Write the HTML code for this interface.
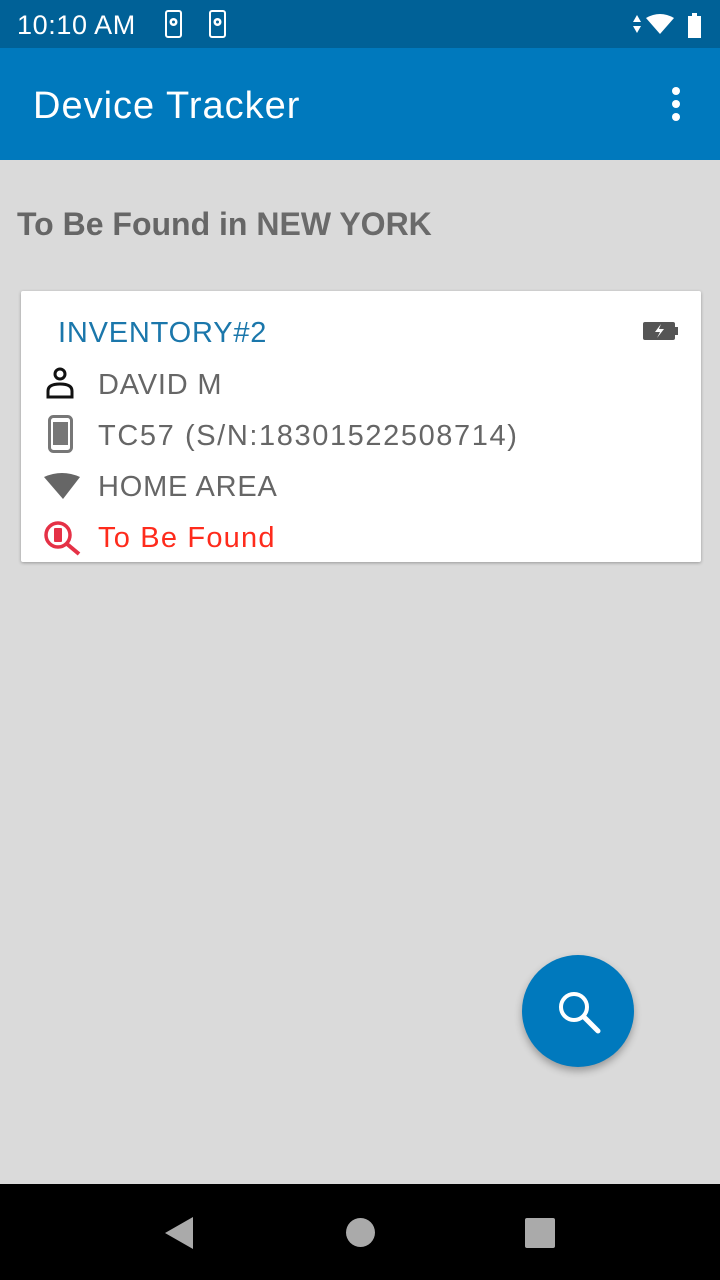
<!DOCTYPE html>
<html><head><style>
body{margin:0;width:720px;height:1280px;background:#dadada;font-family:"Liberation Sans",sans-serif;position:relative;overflow:hidden}
.sb{position:absolute;top:0;left:0;width:720px;height:48px;background:#006197;color:#fff}
.ab{position:absolute;top:48px;left:0;width:720px;height:112px;background:#0079bd;color:#fff}
.card{position:absolute;left:21px;top:291px;width:680px;height:271px;background:#fff;box-shadow:0 1px 3px rgba(0,0,0,.3);border-radius:2px}
.row{position:absolute;left:97px;font-size:29px;color:#666;letter-spacing:0.8px}
.nav{position:absolute;left:0;top:1184px;width:720px;height:96px;background:#000}
</style></head><body>
<div class="sb">
<div style="position:absolute;left:17px;top:10px;font-size:27px;letter-spacing:0.6px">10:10 AM</div>
<svg style="position:absolute;left:164px;top:10px" width="20" height="28"><rect x="2" y="1" width="15" height="26" rx="2" fill="none" stroke="#fff" stroke-width="2"/><circle cx="9.5" cy="12" r="4" fill="#fff"/><circle cx="9.5" cy="12" r="1.5" fill="#006197"/></svg>
<svg style="position:absolute;left:208px;top:10px" width="20" height="28"><rect x="2" y="1" width="15" height="26" rx="2" fill="none" stroke="#fff" stroke-width="2"/><circle cx="9.5" cy="12" r="4" fill="#fff"/><circle cx="9.5" cy="12" r="1.5" fill="#006197"/></svg>
<svg style="position:absolute;left:630px;top:12px" width="82" height="26"><path d="M3 10 L7 3 L11 10Z M3 14 L11 14 L7 21Z" fill="#fff"/><path d="M16 6 Q30 -2 44 6 L30 22Z" fill="#fff"/><rect x="58" y="4" width="13" height="22" fill="#fff"/><rect x="62" y="1" width="5" height="3" fill="#fff"/></svg>
</div>
<div class="ab">
<div style="position:absolute;left:33px;top:37px;font-size:38px;letter-spacing:1px">Device Tracker</div>
<svg style="position:absolute;left:668px;top:38px" width="16" height="40"><circle cx="8" cy="5" r="4" fill="#fff"/><circle cx="8" cy="18" r="4" fill="#fff"/><circle cx="8" cy="31" r="4" fill="#fff"/></svg>
</div>
<div style="position:absolute;left:17px;top:206px;font-size:32px;font-weight:bold;color:#666">To Be Found in <span style="color:#6a6a6a">NEW YORK</span></div>
<div class="card">
<div style="position:absolute;left:37px;top:26px;font-size:29px;color:#1b77ab;letter-spacing:0.8px">INVENTORY#2</div>
<svg style="position:absolute;left:622px;top:29px" width="36" height="22"><rect x="0" y="2" width="32" height="18" rx="2" fill="#555"/><rect x="32" y="7" width="3" height="8" fill="#555"/><path d="M18 4 L12 12 L17 12 L14 18 L21 9 L16 9Z" fill="#fff"/></svg>
<svg style="position:absolute;left:24px;top:75px" width="32" height="34"><circle cx="15" cy="8" r="5" fill="none" stroke="#111" stroke-width="3"/><path d="M3 31 L3 25 Q3 18 15 18 Q27 18 27 25 L27 31Z" fill="none" stroke="#111" stroke-width="3"/></svg>
<div class="row" style="top:78px;left:77px">DAVID M</div>
<svg style="position:absolute;left:27px;top:124px" width="26" height="38"><rect x="1.5" y="1.5" width="22" height="35" rx="4" fill="#fff" stroke="#777" stroke-width="3"/><rect x="5" y="7" width="15" height="23" fill="#777"/></svg>
<div class="row" style="top:129px;left:77px;letter-spacing:1.6px">TC57 (S/N:18301522508714)</div>
<svg style="position:absolute;left:22px;top:180px" width="38" height="30"><path d="M1 6 Q19 -2 37 6 L20 28 Z" fill="#666"/></svg>
<div class="row" style="top:180px;left:77px">HOME AREA</div>
<svg style="position:absolute;left:22px;top:229px" width="40" height="36"><circle cx="15" cy="15" r="12" fill="none" stroke="#e53146" stroke-width="3.5"/><rect x="11" y="8" width="8" height="14" rx="1" fill="#e53146"/><path d="M24 24 L36 34" stroke="#e53146" stroke-width="4"/></svg>
<div class="row" style="top:231px;left:77px;color:#fe2b1c;letter-spacing:1.2px">To Be Found</div>
</div>
<div style="position:absolute;left:522px;top:955px;width:112px;height:112px;border-radius:50%;background:#0079bd;box-shadow:0 4px 8px rgba(0,0,0,.3)"></div>
<svg style="position:absolute;left:555px;top:988px" width="48" height="48"><circle cx="19" cy="19" r="13" fill="none" stroke="#fff" stroke-width="4"/><path d="M29 29 L43 43" stroke="#fff" stroke-width="5" stroke-linecap="round"/></svg>
<div class="nav">
<svg style="position:absolute;left:163px;top:32px" width="32" height="34"><path d="M30 1 L30 33 L2 17Z" fill="#aaa"/></svg>
<div style="position:absolute;left:346px;top:34px;width:29px;height:29px;border-radius:50%;background:#aaa"></div>
<div style="position:absolute;left:525px;top:34px;width:30px;height:30px;background:#aaa;border-radius:2px"></div>
</div>
</body></html>
